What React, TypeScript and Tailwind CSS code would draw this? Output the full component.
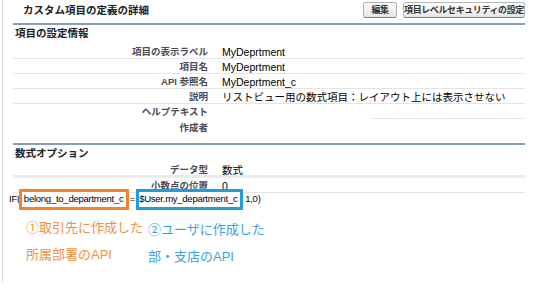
const font = { fontFamily: '"Liberation Sans", "Noto Sans CJK JP", sans-serif' };

type Row = { label: string; value?: string };

const infoRows: Row[] = [
  { label: "項目の表示ラベル", value: "MyDeprtment" },
  { label: "項目名", value: "MyDeprtment" },
  { label: "API 参照名", value: "MyDeprtment_c" },
  { label: "説明", value: "リストビュー用の数式項目：レイアウト上には表示させない" },
];

const DetailRow = ({ label, value, border = "border-b border-[#e4e4e4]" }: Row & { border?: string }) => (
  <div className={`flex h-[15px] pt-[2px] items-center ${border}`}>
    <div className="w-[195px] shrink-0 text-right text-[9.5px] font-bold text-[#4a4a56] leading-none">{label}</div>
    <div className="ml-[14px] text-[10.5px] text-black leading-none whitespace-nowrap">{value}</div>
  </div>
);

const Btn = ({ children, w }: { children: string; w: string }) => (
  <button
    type="button"
    className={`${w} h-[16px] whitespace-nowrap rounded-[3px] border border-[#b5b5b5] border-b-[#7f7f7f] bg-gradient-to-b from-white to-[#e6e6e6] text-[9px] font-bold tracking-[-0.4px] text-[#333] leading-none`}
  >
    {children}
  </button>
);

export default function App() {
  return (
    <div className="w-[543px] h-[293px] bg-white overflow-hidden" style={font}>
      <div className="ml-[2px] h-[282px] w-[523px] border-l border-[#dcdcdc] pl-[10px]">
        {/* header */}
        <div className="flex h-[23px] items-start justify-between">
          <div className="pl-[10px] pt-[3px] text-[10.5px] font-bold text-[#222] leading-[14px]">
            カスタム項目の定義の詳細
          </div>
          <div className="flex gap-[6px] pt-[2px]">
            <Btn w="w-[34px]">編集</Btn>
            <Btn w="w-[122px]">項目レベルセキュリティの設定</Btn>
          </div>
        </div>
        <div className="h-[2px] bg-[#8a9dbf]" />

        {/* 項目の設定情報 */}
        <div className="h-[19px] pl-[2px] pt-[1px] text-[10.5px] font-bold text-[#222] leading-[15px]">
          項目の設定情報
        </div>
        {infoRows.map((r) => (
          <DetailRow key={r.label} {...r} />
        ))}
        <div className="flex h-[15px] flex-col">
          <div className="flex h-[14px] pt-[2px] items-center">
            <div className="w-[195px] text-right text-[9.5px] font-bold text-[#4a4a56] leading-none">ヘルプテキスト</div>
          </div>
          <div className="ml-[359px] h-px bg-[#e4e4e4]" />
        </div>
        <DetailRow label="作成者" border="" />
        <div className="h-[9px]" />
        <div className="h-[2px] bg-[#8a9dbf]" />

        {/* 数式オプション */}
        <div className="h-[18px] pl-[2px] pt-[1px] text-[10.5px] font-bold text-[#222] leading-[15px]">
          数式オプション
        </div>
        <DetailRow label="データ型" value="数式" border="border-b-[3px] border-[#ebebeb]" />
        <DetailRow label="小数点の位置" value="0" />

        {/* formula */}
        <div className="-ml-[4px] -mt-[4px] flex h-[21px] items-center text-[9.5px] text-black tracking-[-0.25px] whitespace-nowrap">
          <span>IF(</span>
          <span className="-ml-[1px] flex h-[21px] w-[110px] shrink-0 items-center overflow-hidden border-[3px] border-[#f5822a] bg-white pl-[2px]">
            belong_to_department_c
          </span>
          <span className="mx-[1px]">=</span>
          <span className="flex h-[21px] w-[107px] shrink-0 items-center overflow-hidden border-[3px] border-[#1e9fdc] bg-white">
            $User.my_department_c
          </span>
          <span className="ml-[2px]">1,0)</span>
        </div>

        {/* notes */}
        <div className="flex text-[13px] leading-[27px]">
          <div className="ml-[13px] w-[122px] pt-[4px] text-[#f39040] whitespace-nowrap">
            <div>①取引先に作成した</div>
            <div>所属部署のAPI</div>
          </div>
          <div className="pt-[6px] text-[#3b9fe0] whitespace-nowrap">
            <div>②ユーザに作成した</div>
            <div>部・支店のAPI</div>
          </div>
        </div>
      </div>
    </div>
  );
}
